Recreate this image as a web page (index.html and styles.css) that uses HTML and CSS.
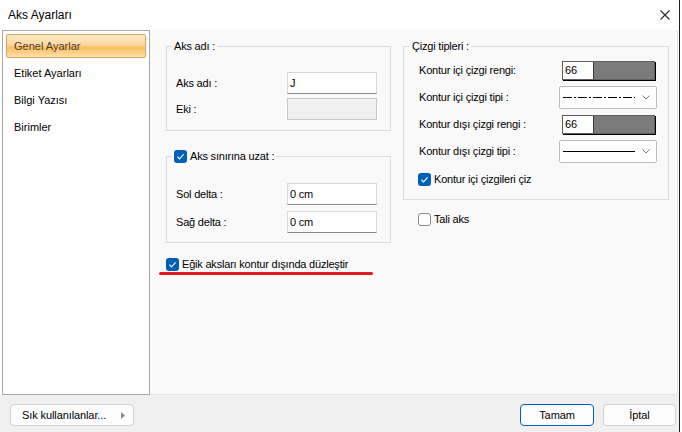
FILE: index.html
```html
<!DOCTYPE html>
<html lang="tr">
<head>
<meta charset="utf-8">
<title>Aks Ayarları</title>
<link rel="stylesheet" href="styles.css">
</head>
<body>
<div class="window">
  <div class="titlebar">
    <span class="title">Aks Ayarları</span>
    <svg class="close" width="10" height="10" viewBox="0 0 10 10"><path d="M0.5 0.5 L9.5 9.5 M9.5 0.5 L0.5 9.5" stroke="#2a2a2a" stroke-width="1.1" fill="none"/></svg>
  </div>
  <div class="main">
    <ul class="sidebar">
      <li class="item active">Genel Ayarlar</li>
      <li class="item">Etiket Ayarları</li>
      <li class="item">Bilgi Yazısı</li>
      <li class="item">Birimler</li>
    </ul>
    <div class="panel">
      <div class="col col-left">
        <fieldset class="group g1">
          <legend>Aks adı :</legend>
          <div class="row"><span class="lbl">Aks adı :</span><span class="input">J</span></div>
          <div class="row"><span class="lbl">Eki :</span><span class="input disabled"></span></div>
        </fieldset>
        <fieldset class="group g2">
          <legend><span class="check on"><svg width="13" height="13" viewBox="0 0 13 13"><rect x="0" y="0" width="13" height="13" rx="3" fill="#005fb8"/><path d="M3.4 6.7 L5.5 8.8 L9.6 4.4" stroke="#fff" stroke-width="1.2" fill="none"/></svg></span>Aks sınırına uzat :</legend>
          <div class="row"><span class="lbl">Sol delta :</span><span class="input">0 cm</span></div>
          <div class="row"><span class="lbl">Sağ delta :</span><span class="input">0 cm</span></div>
        </fieldset>
        <div class="checkrow egik"><span class="check on"><svg width="13" height="13" viewBox="0 0 13 13"><rect x="0" y="0" width="13" height="13" rx="3" fill="#005fb8"/><path d="M3.4 6.7 L5.5 8.8 L9.6 4.4" stroke="#fff" stroke-width="1.2" fill="none"/></svg></span>Eğik aksları kontur dışında düzleştir</div>
        <div class="underline"></div>
      </div>
      <div class="col col-right">
        <fieldset class="group g3">
          <legend>Çizgi tipleri :</legend>
          <div class="row"><span class="lbl">Kontur içi çizgi rengi:</span><span class="colorbox"><span class="cb-text">66</span><span class="cb-swatch"></span></span></div>
          <div class="row"><span class="lbl">Kontur içi çizgi tipi :</span><span class="combo"><svg class="linesample" width="72" height="3" viewBox="0 0 72 3"><path d="M0 1.5 H72" stroke="#000" stroke-width="1" stroke-dasharray="9 2 2 2"/></svg><svg class="chev" width="8" height="5" viewBox="0 0 8 5"><path d="M0.5 0.5 L4 4 L7.5 0.5" stroke="#7a7a7a" stroke-width="1" fill="none"/></svg></span></div>
          <div class="row"><span class="lbl">Kontur dışı çizgi rengi :</span><span class="colorbox"><span class="cb-text">66</span><span class="cb-swatch"></span></span></div>
          <div class="row"><span class="lbl">Kontur dışı çizgi tipi :</span><span class="combo"><svg class="linesample" width="72" height="3" viewBox="0 0 72 3"><path d="M0 1.5 H72" stroke="#000" stroke-width="1"/></svg><svg class="chev" width="8" height="5" viewBox="0 0 8 5"><path d="M0.5 0.5 L4 4 L7.5 0.5" stroke="#7a7a7a" stroke-width="1" fill="none"/></svg></span></div>
          <div class="checkrow inner-check"><span class="check on"><svg width="13" height="13" viewBox="0 0 13 13"><rect x="0" y="0" width="13" height="13" rx="3" fill="#005fb8"/><path d="M3.4 6.7 L5.5 8.8 L9.6 4.4" stroke="#fff" stroke-width="1.2" fill="none"/></svg></span>Kontur içi çizgileri çiz</div>
        </fieldset>
        <div class="checkrow tali"><span class="check off"></span>Tali aks</div>
      </div>
    </div>
  </div>
  <div class="footer">
    <span class="btn fav"><span>Sık kullanılanlar...</span><svg width="4" height="7" viewBox="0 0 4 7"><path d="M0 0 L4 3.5 L0 7 Z" fill="#8a8a8a"/></svg></span>
    <span class="spacer"></span>
    <span class="btn ok">Tamam</span>
    <span class="btn cancel">İptal</span>
  </div>
</div>
</body>
</html>
```

FILE: styles.css
```css
html, body {
  margin: 0;
  padding: 0;
  background: #ffffff;
}

body {
  font-family: "Liberation Sans", Arial, sans-serif;
  font-size: 11px;
  color: #000;
}

.window {
  width: 680px;
  height: 432px;
  box-sizing: border-box;
  border-right: 1px solid #1e1e1e;
  display: flex;
  flex-direction: column;
  background: #ffffff;
}

.titlebar {
  height: 30px;
  flex: none;
  display: flex;
  align-items: center;
  justify-content: space-between;
  padding: 0 9px 0 8px;
  font-size: 12px;
  background: #ffffff;
}

.title {
  color: #000;
}

.close {
  display: block;
}

.main {
  height: 365px;
  flex: none;
  display: flex;
  padding-left: 2px;
  background: #ffffff;
}

.sidebar {
  width: 148px;
  box-sizing: border-box;
  margin: 0;
  padding: 3px 2px 0 3px;
  list-style: none;
  background: #ffffff;
  border: 1px solid #a8a8a8;
}

.item {
  width: 140px;
  height: 24px;
  box-sizing: border-box;
  line-height: 22px;
  padding-left: 7px;
  margin-bottom: 3px;
  border: 1px solid transparent;
  color: #000;
}

.item.active {
  border-color: #d4a85f;
  border-radius: 2px;
  color: #4b3b28;
  background: linear-gradient(to bottom, #fee8c6 0%, #fdd9a3 42%, #f9c163 58%, #fbcf86 80%, #fde0ad 100%);
}

.panel {
  flex: 1;
  display: flex;
  gap: 12px;
  padding: 9px 0 0 16px;
  margin-right: 1px;
  box-sizing: border-box;
  background: #f9f9f9;
  border-right: 1px solid #dedede;
  border-bottom: 1px solid #e6e6e6;
  letter-spacing: -0.2px;
}

.col-left {
  width: 225px;
  flex: none;
}

.col-right {
  width: 266px;
  flex: none;
}

.group {
  margin: 0;
  min-width: 0;
  border: 1px solid #dcdcdc;
}

.group legend {
  padding: 0 2px;
  line-height: 14px;
}

.g1 {
  padding: 19px 13px 10px 9px;
}

.g1 legend,
.g2 legend {
  margin-left: -4px;
}

.g2 {
  margin-top: 18px;
  padding: 20px 13px 9px 9px;
}

.g2 legend {
  display: flex;
  align-items: center;
  gap: 3px;
}

.row {
  display: flex;
  align-items: center;
  justify-content: space-between;
  height: 22px;
}

.g1 .row + .row {
  margin-top: 4px;
}

.g2 .row + .row {
  margin-top: 6px;
}

.input {
  width: 90px;
  height: 22px;
  box-sizing: border-box;
  background: #ffffff;
  border: 1px solid #d8d8d8;
  border-bottom-color: #8c8c8c;
  padding-left: 2px;
  line-height: 20px;
}

.input.disabled {
  background: #f0f0f0;
  border-color: #c9c9c9;
}

.check {
  width: 13px;
  height: 13px;
  flex: none;
  display: block;
}

.check svg {
  display: block;
}

.check.off {
  box-sizing: border-box;
  border: 1px solid #8a8a8a;
  border-radius: 3px;
  background: #fdfdfd;
}

.checkrow {
  display: flex;
  align-items: center;
  gap: 3px;
  height: 14px;
}

.egik {
  margin-top: 14px;
}

.underline {
  width: 214px;
  height: 3px;
  margin-top: 1px;
  margin-left: -7px;
  border-radius: 2px;
  background: #e31b23;
}

.g3 {
  padding: 6px 11px 13px 15px;
}

.g3 legend {
  margin-left: -9px;
}

.g3 .row + .row {
  margin-top: 5px;
}

.colorbox {
  width: 93px;
  height: 19px;
  box-sizing: border-box;
  display: flex;
  margin-right: 2px;
  border: 1px solid #5e5e5e;
  box-shadow: 1px 1px 0 #000;
  background: #ffffff;
}

.cb-text {
  width: 30px;
  flex: none;
  padding-left: 2px;
  box-sizing: border-box;
  line-height: 17px;
  background: #ffffff;
}

.cb-swatch {
  flex: 1;
  background: #7b7b7b;
  border-left: 1px solid #3a3a3a;
}

.combo {
  width: 98px;
  height: 23px;
  box-sizing: border-box;
  display: flex;
  align-items: center;
  justify-content: space-between;
  padding: 0 6px 0 3px;
  background: #ffffff;
  border: 1px solid #bdbdbd;
  border-radius: 2px;
}

.linesample,
.chev {
  display: block;
}

.inner-check {
  margin-top: 10px;
  margin-left: -1px;
}

.tali {
  margin-top: 12px;
  margin-left: 15px;
}

.footer {
  height: 37px;
  flex: none;
  box-sizing: border-box;
  display: flex;
  align-items: flex-start;
  padding: 9px 3px 0 10px;
  background: #f0f0f0;
  letter-spacing: -0.1px;
}

.btn {
  height: 22px;
  box-sizing: border-box;
  display: flex;
  align-items: center;
  justify-content: center;
  background: #fdfdfd;
  border: 1px solid #d0d0d0;
  border-radius: 4px;
  color: #000;
}

.fav {
  width: 124px;
  justify-content: space-between;
  padding: 0 8px 0 11px;
}

.spacer {
  flex: 1;
}

.ok {
  width: 74px;
  border-color: #005fb8;
}

.cancel {
  width: 73px;
  margin-left: 9px;
}
```
